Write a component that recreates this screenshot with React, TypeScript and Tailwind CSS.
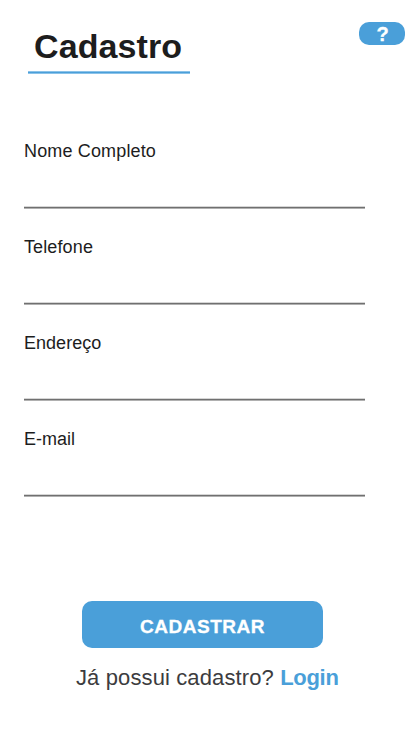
const fields = [
  { id: "nome", label: "Nome Completo", type: "text", spacing: "tracking-[0.15px]" },
  { id: "telefone", label: "Telefone", type: "tel", spacing: "tracking-[0.12px]" },
  { id: "endereco", label: "Endereço", type: "text", spacing: "tracking-[0.03px]" },
  { id: "email", label: "E-mail", type: "email", spacing: "tracking-[0px]" },
];

export default function App() {
  return (
    <main className="flex h-[736px] w-[414px] flex-col overflow-hidden bg-white font-['Liberation_Sans',Arial,sans-serif] text-[#1d1d1d]">
      <header className="flex h-[142px] shrink-0 items-start justify-between pl-[27px] pr-[9px] pt-[22px]">
        <div className="w-[163px]">
          <h1 className="h-[49px] whitespace-nowrap pl-[7px] pt-[4px] text-[34px] font-bold leading-10 tracking-[0.1px]">Cadastro</h1>
          <div className="ml-px h-[3px] w-[162px] bg-linear-to-b from-[#a9d3f0] via-[#4a9fd9] to-[#a9d3f0]" />
        </div>
        <button aria-label="Ajuda" className="flex h-[23px] w-[46px] items-center justify-center rounded-[10px] bg-[#4a9fd9] pl-px text-[20px] font-bold leading-none text-white [-webkit-text-stroke:0.3px_white]">
          ?
        </button>
      </header>

      <form className="flex grow flex-col">
        <div className="flex flex-col gap-[29px] pl-6">
          {fields.map((field) => (
            <div key={field.id} className="flex h-[67px] w-[341px] flex-col">
              <label htmlFor={field.id} className={`h-[20px] whitespace-nowrap text-[18px] leading-[18px] ${field.spacing}`}>
                {field.label}
              </label>
              <input id={field.id} type={field.type} className="h-[44px] w-full bg-transparent outline-none" />
              <div className="h-px w-full bg-[#d6d6d6]" />
              <div className="h-px w-full bg-[#707070]" />
              <div className="h-px w-full bg-[#b0b0b0]" />
            </div>
          ))}
        </div>
        <button type="button" className="ml-[82px] mt-[104px] h-[47px] w-[241px] shrink-0 rounded-[10px] bg-[#4a9fd9] pt-[3px] text-[19px] font-bold leading-none tracking-[0.5px] text-white [-webkit-text-stroke:0.3px_white]">
          CADASTRAR
        </button>
        <p className="ml-[76px] mt-[17px] whitespace-nowrap text-[22px] leading-[26px] text-[#3c3c3e]">
          <span className="tracking-[0.12px]">Já possui cadastro? </span><a href="#login" className="font-bold tracking-[-0.3px] text-[#4a9fd9]">Login</a>
        </p>
      </form>
    </main>
  );
}
